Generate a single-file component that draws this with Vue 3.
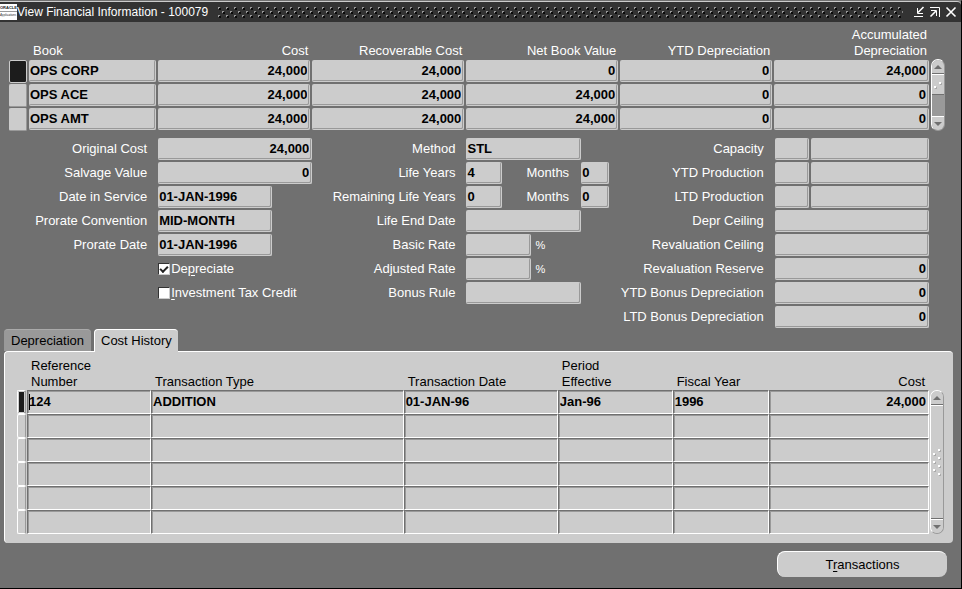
<script setup>
import { ref } from 'vue'

const books = [
  { book: 'OPS CORP', cost: '24,000', recoverable: '24,000', net: '0', ytd: '0', accumulated: '24,000' },
  { book: 'OPS ACE', cost: '24,000', recoverable: '24,000', net: '24,000', ytd: '0', accumulated: '0' },
  { book: 'OPS AMT', cost: '24,000', recoverable: '24,000', net: '24,000', ytd: '0', accumulated: '0' }
]
const bookKeys = ['book', 'cost', 'recoverable', 'net', 'ytd', 'accumulated']

const costFields = [
  { id: 'original-cost', label: 'Original Cost', value: '24,000', size: 'full', right: true },
  { id: 'salvage-value', label: 'Salvage Value', value: '0', size: 'full', right: true },
  { id: 'date-in-service', label: 'Date in Service', value: '01-JAN-1996', size: 'medium' },
  { id: 'prorate-convention', label: 'Prorate Convention', value: 'MID-MONTH', size: 'medium' },
  { id: 'prorate-date', label: 'Prorate Date', value: '01-JAN-1996', size: 'medium' }
]

const methodFields = [
  { id: 'method', label: 'Method', value: 'STL', size: 'medium' },
  { id: 'life-years', label: 'Life Years', value: '4', size: 'small', months: '0' },
  { id: 'remaining-years', label: 'Remaining Life Years', value: '0', size: 'small', months: '0' },
  { id: 'life-end', label: 'Life End Date', value: '', size: 'medium' },
  { id: 'basic-rate', label: 'Basic Rate', value: '', size: 'rate', percent: true },
  { id: 'adjusted-rate', label: 'Adjusted Rate', value: '', size: 'rate', percent: true },
  { id: 'bonus-rule', label: 'Bonus Rule', value: '', size: 'medium' }
]

const productionFields = [
  { id: 'capacity', label: 'Capacity', value: '', unit: true },
  { id: 'ytd-production', label: 'YTD Production', value: '', unit: true },
  { id: 'ltd-production', label: 'LTD Production', value: '', unit: true },
  { id: 'depr-ceiling', label: 'Depr Ceiling', value: '' },
  { id: 'reval-ceiling', label: 'Revaluation Ceiling', value: '' },
  { id: 'reval-reserve', label: 'Revaluation Reserve', value: '0' },
  { id: 'ytd-bonus', label: 'YTD Bonus Depreciation', value: '0' },
  { id: 'ltd-bonus', label: 'LTD Bonus Depreciation', value: '0' }
]

const history = [
  ['124', 'ADDITION', '01-JAN-96', 'Jan-96', '1996', '24,000'],
  ...Array.from({ length: 5 }, () => ['', '', '', '', '', ''])
]

const currentBook = ref(0)
const currentLine = ref(0)
const depreciate = ref(true)
const taxCredit = ref(false)
const activeTab = ref('history')
</script>

<template>
  <div class="window">
    <header class="title-bar">
      <span class="logo"><b>ORACLE</b><i>Applications</i></span>
      <h1>View Financial Information - 100079</h1>
      <svg class="grip" aria-hidden="true">
        <defs>
          <pattern id="studs" width="8" height="8" patternUnits="userSpaceOnUse">
            <path fill="#0a0a0a" d="M1 1h2v2h-2z M5 5h2v2h-2z" />
            <path fill="#999" d="M0 0h2v1h-1v1h-1z M4 4h2v1h-1v1h-1z" />
          </pattern>
        </defs>
        <rect width="100%" height="11" fill="url(#studs)" />
      </svg>
      <button class="window-button" aria-label="Minimize">
        <svg width="12" height="12" viewBox="0 0 12 12">
          <path class="thick" d="M10.5 1 L5 6.5" />
          <path d="M4.5 2 V7.5 H10 M1 10.5 H10" />
        </svg>
      </button>
      <button class="window-button" aria-label="Restore">
        <svg width="12" height="12" viewBox="0 0 12 12">
          <path d="M1 1.5 H10.5 V11 M2 4.5 H7.5 V10" />
          <path class="thick" d="M1.5 10.5 L7 5" />
        </svg>
      </button>
      <button class="window-button" aria-label="Close">
        <svg width="12" height="12" viewBox="0 0 12 12">
          <path class="thick" d="M1.5 1.5 L10.5 10.5 M10.5 1.5 L1.5 10.5" />
        </svg>
      </button>
    </header>

    <section class="books">
      <table class="book-table">
        <colgroup>
          <col class="col-select" />
          <col />
          <col v-for="n in 4" :key="n" class="col-amount" />
          <col class="col-total" />
        </colgroup>
        <thead>
          <tr>
            <th></th>
            <th class="left">Book</th>
            <th>Cost</th>
            <th>Recoverable Cost</th>
            <th>Net Book Value</th>
            <th>YTD Depreciation</th>
            <th>Accumulated<br />Depreciation</th>
          </tr>
        </thead>
        <tbody>
          <tr v-for="(row, i) in books" :key="row.book">
            <td>
              <button
                class="selector"
                :class="{ current: i === currentBook }"
                :aria-label="'Select ' + row.book"
                @click="currentBook = i"
              ></button>
            </td>
            <td v-for="key in bookKeys" :key="key">
              <input
                class="field"
                :class="{ right: key !== 'book' }"
                :value="row[key]"
                :aria-label="key"
                readonly
              />
            </td>
          </tr>
        </tbody>
      </table>
      <div class="scrollbar dark">
        <button aria-label="Scroll up"><svg width="8" height="4"><path d="M0 4 L4 0 L8 4 Z" /></svg></button>
        <div class="thumb">
          <svg width="10" height="10">
            <path class="dot-light" d="M1 6h2v2h-2z M6 2h2v2h-2z" />
            <path class="dot-shade" d="M3 7h1v2h-2v-1h1z M8 3h1v2h-2v-1h1z" />
          </svg>
        </div>
        <div class="track"></div>
        <button aria-label="Scroll down"><svg width="8" height="4"><path d="M0 0 L4 4 L8 0 Z" /></svg></button>
      </div>
    </section>

    <section class="details">
      <div class="column">
        <div v-for="f in costFields" :key="f.id" class="row">
          <label :for="f.id">{{ f.label }}</label>
          <div class="cell">
            <input :id="f.id" class="field" :class="[f.size, { right: f.right }]" :value="f.value" readonly />
          </div>
        </div>
        <div class="row">
          <label class="check">
            <input v-model="depreciate" type="checkbox" />
            <span>De<u>p</u>reciate</span>
          </label>
        </div>
        <div class="row">
          <label class="check">
            <input v-model="taxCredit" type="checkbox" />
            <span><u>I</u>nvestment Tax Credit</span>
          </label>
        </div>
      </div>

      <div class="column">
        <div v-for="f in methodFields" :key="f.id" class="row">
          <label :for="f.id">{{ f.label }}</label>
          <div class="cell">
            <input :id="f.id" class="field" :class="f.size" :value="f.value" readonly />
            <template v-if="f.months">
              <label class="months" :for="f.id + '-months'">Months</label>
              <input :id="f.id + '-months'" class="field tiny" :value="f.months" readonly />
            </template>
            <span v-if="f.percent" class="percent">%</span>
          </div>
        </div>
      </div>

      <div class="column">
        <div v-for="f in productionFields" :key="f.id" class="row">
          <label :for="f.id">{{ f.label }}</label>
          <div class="cell">
            <input v-if="f.unit" class="field unit" :aria-label="f.label + ' unit'" readonly />
            <input :id="f.id" class="field grow right" :value="f.value" readonly />
          </div>
        </div>
      </div>
    </section>

    <section class="tabs">
      <div class="tab-list" role="tablist">
        <button
          class="tab"
          :class="{ active: activeTab === 'depreciation' }"
          role="tab"
          @click="activeTab = 'depreciation'"
        >
          Depreciation
        </button>
        <button class="tab" :class="{ active: activeTab === 'history' }" role="tab" @click="activeTab = 'history'">
          Cost History
        </button>
      </div>
      <div class="panel">
        <table class="history-table">
          <colgroup>
            <col class="col-mark" />
            <col class="col-reference" />
            <col class="col-type" />
            <col class="col-date" />
            <col class="col-period" />
            <col class="col-year" />
            <col />
          </colgroup>
          <thead>
            <tr>
              <th></th>
              <th>Reference<br />Number</th>
              <th>Transaction Type</th>
              <th>Transaction Date</th>
              <th>Period<br />Effective</th>
              <th>Fiscal Year</th>
              <th class="right">Cost</th>
            </tr>
          </thead>
          <tbody>
            <tr v-for="(line, i) in history" :key="i">
              <td>
                <button
                  class="marker"
                  :class="{ current: i === currentLine }"
                  :aria-label="'Select line ' + (i + 1)"
                  @click="currentLine = i"
                ></button>
              </td>
              <td v-for="(value, j) in line" :key="j" :class="{ caret: i === currentLine && j === 0 }">
                <input
                  class="sunken"
                  :class="{ right: j === 5 }"
                  :value="value"
                  :aria-label="'Line ' + (i + 1) + ' column ' + (j + 1)"
                  readonly
                />
              </td>
            </tr>
          </tbody>
        </table>
        <div class="scrollbar">
          <button aria-label="Scroll up"><svg width="8" height="4"><path d="M0 4 L4 0 L8 4 Z" /></svg></button>
          <div class="thumb whole">
            <svg width="10" height="28">
              <path class="dot-light" d="M6 1h2v2h-2z M1 5h2v2h-2z M6 9h2v2h-2z M1 13h2v2h-2z M6 17h2v2h-2z M1 21h2v2h-2z M6 25h2v2h-2z" />
              <path class="dot-shade" d="M8 2h1v2h-2v-1h1z M3 6h1v2h-2v-1h1z M8 10h1v2h-2v-1h1z M3 14h1v2h-2v-1h1z M8 18h1v2h-2v-1h1z M3 22h1v2h-2v-1h1z M8 26h1v2h-2v-1h1z" />
            </svg>
          </div>
          <button aria-label="Scroll down"><svg width="8" height="4"><path d="M0 0 L4 4 L8 0 Z" /></svg></button>
        </div>
      </div>
    </section>

    <footer class="actions">
      <button class="action">T<u>r</u>ansactions</button>
    </footer>
  </div>
</template>

<style>
body {
  background: #707070;
}
</style>

<style scoped>
.window {
  box-sizing: border-box;
  min-height: 100vh;
  border-top: 1px solid #707070;
  border-right: 1px solid #000;
  border-bottom: 1px solid #000;
  background: #707070;
  color: #fff;
  font-family: 'Liberation Sans', Arial, sans-serif;
  font-size: 13px;
  line-height: 16px;
}
button,
input {
  box-sizing: border-box;
  margin: 0;
  padding: 0;
  border: 0;
  border-radius: 0;
  font: inherit;
  color: inherit;
  outline: none;
}
u {
  text-underline-offset: 2px;
}

/* title bar */
.title-bar {
  display: flex;
  align-items: center;
  height: 20px;
  padding-right: 2px;
  border-top: 1px solid #ccc;
  border-radius: 0 4px 0 0;
  background: #333;
}
.logo {
  display: flex;
  flex-direction: column;
  width: 17px;
  height: 16px;
  background: #fff;
  color: #222;
  font-size: 3px;
  line-height: 7px;
}
.logo b {
  border-bottom: 1px solid #999;
  font-size: 4px;
}
.title-bar h1 {
  margin: 0 10px 0 0;
  font-size: 12px;
  font-weight: normal;
  white-space: nowrap;
}
.grip {
  flex: 1;
  min-width: 0;
  height: 11px;
  margin-right: 8px;
}
.window-button {
  display: flex;
  width: 16px;
  justify-content: center;
  background: none;
}
.window-button svg {
  fill: none;
  stroke: #fff;
  stroke-width: 1;
}
.window-button .thick {
  stroke-width: 1.6;
}

/* fields */
.field {
  display: block;
  height: 22px;
  padding: 0 2px 0 1px;
  border-right: 1px solid #ccc;
  border-bottom: 1px solid #ccc;
  border-radius: 2px;
  background: #ccc;
  box-shadow: inset -1px -1px #999;
  color: #000;
  font-weight: bold;
}
.right {
  text-align: right;
}
table {
  width: 100%;
  border-collapse: collapse;
  table-layout: fixed;
}
th,
td {
  padding: 0;
}
th {
  font-weight: normal;
  vertical-align: bottom;
}

/* books */
.books {
  display: flex;
  align-items: flex-end;
  padding: 5px 16px 0 9px;
}
.book-table {
  flex: 1;
}
.book-table th {
  padding: 0 4px;
  text-align: right;
}
.book-table th.left {
  text-align: left;
}
.book-table td {
  height: 24px;
  padding-right: 2px;
  vertical-align: middle;
}
.book-table .field {
  width: 100%;
}
.col-select {
  width: 20px;
}
.col-amount {
  width: 16.7%;
}
.col-total {
  width: 17%;
}
.selector {
  display: block;
  width: 18px;
  height: 23px;
  border: 1px solid #ccc;
  border-right-color: #999;
  border-bottom-color: #999;
  border-radius: 2px;
  background: #ccc;
}
.selector.current {
  border-color: #ccc;
  background: #1c1c1c;
}

/* scrollbars */
.scrollbar {
  display: flex;
  flex-direction: column;
  box-sizing: border-box;
  width: 14px;
  border: 1px solid #fff;
  border-right-color: #999;
  border-bottom-color: #999;
  border-radius: 7px;
  background: #ccc;
  overflow: hidden;
}
.scrollbar.dark {
  height: 72px;
  background: #999;
}
.scrollbar button {
  display: flex;
  height: 14px;
  align-items: center;
  justify-content: center;
  background: #ccc;
}
.scrollbar button:first-child {
  border-bottom: 1px solid #707070;
}
.scrollbar button:last-child {
  border-top: 1px solid #fff;
}
.scrollbar svg {
  fill: #707070;
}
.scrollbar .dot-light {
  fill: #fff;
}
.scrollbar .dot-shade {
  fill: #aaa;
}
.thumb {
  display: flex;
  box-sizing: border-box;
  height: 21px;
  align-items: center;
  justify-content: center;
  border-top: 1px solid #fff;
  border-bottom: 1px solid #707070;
  background: #ccc;
}
.thumb.whole,
.track {
  flex: 1;
}

/* details */
.details {
  display: grid;
  grid-template-columns: repeat(3, minmax(0, 1fr));
  padding: 6px 32px 0 4px;
}
.row {
  display: grid;
  grid-template-columns: repeat(2, minmax(0, 1fr));
  height: 24px;
  align-items: center;
}
.row > label {
  padding-right: 11px;
  text-align: right;
  white-space: nowrap;
}
.cell {
  display: flex;
  align-items: center;
  gap: 2px;
}
.full {
  width: 100%;
}
.medium {
  width: 74%;
}
.rate {
  width: 65px;
}
.small {
  width: 36px;
}
.unit {
  width: 34px;
}
.grow {
  flex: 1;
  min-width: 0;
}
.tiny {
  width: 28px;
}
.months {
  margin: 0 10px 0 22px;
}
.percent {
  margin-left: 2px;
  font-size: 11px;
}
.row > .check {
  display: flex;
  grid-column: 2;
  align-items: center;
  gap: 1px;
  padding: 0;
}
.check input {
  width: 12px;
  height: 12px;
  appearance: none;
  border: 1px solid #333;
  border-right-color: #ccc;
  border-bottom-color: #ccc;
  background: #fff;
}
.check input:checked::before {
  content: '';
  display: block;
  width: 6px;
  height: 3px;
  margin: 2px 0 0 1px;
  border: solid #222;
  border-width: 0 0 2px 2px;
  transform: rotate(-45deg);
}

/* tabs */
.tabs {
  padding: 0 8px 0 4px;
  color: #000;
}
.tab-list {
  display: flex;
  align-items: flex-end;
  gap: 3px;
}
.tab {
  height: 22px;
  padding: 0 7px;
  border-top: 1px solid #aaa;
  border-radius: 4px 4px 0 0;
  background: #999;
}
.tab.active {
  position: relative;
  height: 23px;
  margin-bottom: -1px;
  padding: 0 6px;
  border-top: 1px solid #fff;
  border-left: 1px solid #fff;
  background: #ccc;
}
.panel {
  display: flex;
  align-items: flex-end;
  gap: 1px;
  padding: 6px 9px 9px 12px;
  border-top: 1px solid #fff;
  border-left: 1px solid #fff;
  border-radius: 4px;
  background: #ccc;
}
.history-table {
  flex: 1;
}
.history-table th {
  padding: 0 4px;
  text-align: left;
}
.history-table th.right {
  text-align: right;
}
.history-table td {
  height: 24px;
}
.col-mark {
  width: 10px;
}
.col-reference {
  width: 13.6%;
}
.col-type {
  width: 27.7%;
}
.col-date {
  width: 16.9%;
}
.col-period {
  width: 12.6%;
}
.col-year {
  width: 10.6%;
}
.sunken {
  display: block;
  width: 100%;
  height: 24px;
  padding: 0 2px 2px 1px;
  border: 1px solid #707070;
  border-right-color: #fff;
  border-bottom-color: #fff;
  background: #ccc;
  box-shadow: inset 1px 1px #999;
  font-weight: bold;
}
.caret .sunken {
  background: linear-gradient(#000, #000) 1px 3px / 1px 16px no-repeat #ccc;
}
.marker {
  display: block;
  width: 9px;
  height: 24px;
  border: 1px solid #fff;
  border-right-color: #999;
  border-radius: 2px;
  background: #ccc;
}
.marker.current {
  box-shadow: inset 0 0 0 1px #ccc;
  background: #1c1c1c;
}
.panel .scrollbar {
  height: 144px;
}

/* footer */
.actions {
  display: flex;
  justify-content: flex-end;
  padding: 8px 14px 11px;
}
.action {
  width: 170px;
  height: 26px;
  border-top: 1px solid #fff;
  border-left: 1px solid #fff;
  border-radius: 8px;
  background: #ccc;
  color: #000;
}
</style>
